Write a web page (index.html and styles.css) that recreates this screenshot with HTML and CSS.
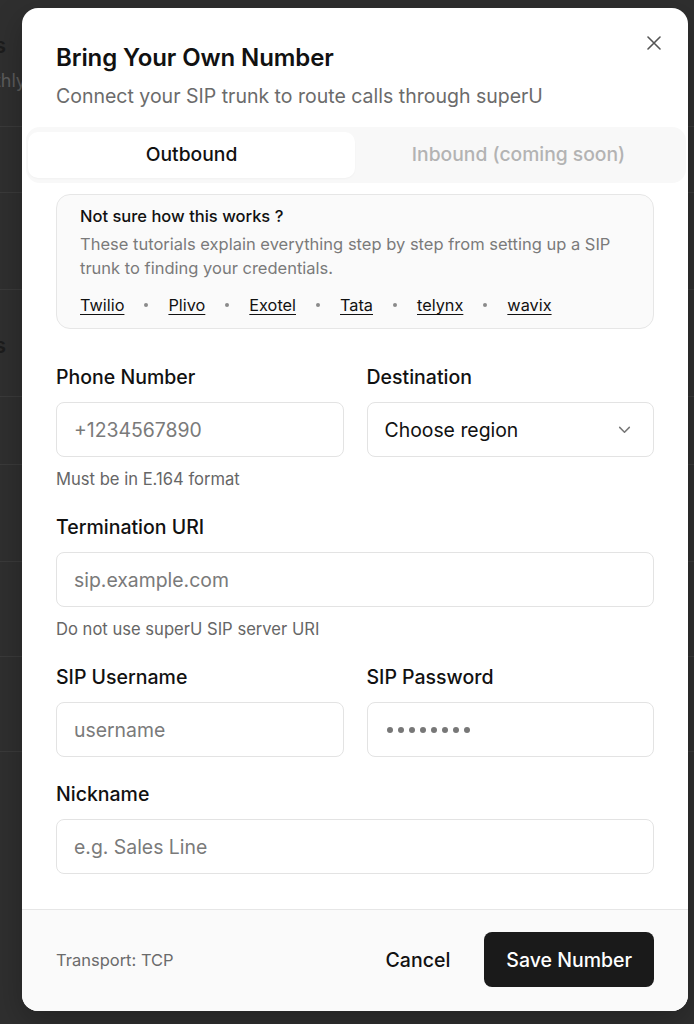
FILE: index.html
```html
<!DOCTYPE html>
<html lang="en">
<head>
<meta charset="utf-8">
<title>Bring Your Own Number</title>
<link rel="stylesheet" href="styles.css">
</head>
<body>
<div class="page">
  <div class="page-row r1">
    <div class="clip"><span class="pg-title">Numbers</span></div>
    <div class="clip"><span class="pg-sub">Monthly</span></div>
  </div>
  <div class="page-row r2"></div>
  <div class="page-row r3"></div>
  <div class="page-row r4"><div class="clip"><span class="pg-title">Calls</span></div></div>
  <div class="page-row r5"></div>
  <div class="page-row r6"></div>
  <div class="page-row r7"></div>
  <div class="page-row r8"></div>
</div>

<div class="modal" role="dialog" aria-labelledby="modal-title">
  <button class="close" aria-label="Close">
    <svg width="14" height="14" viewBox="0 0 14 14" fill="none" stroke="#555" stroke-width="1.6" stroke-linecap="round"><path d="M1 1L13 13M13 1L1 13"/></svg>
  </button>
  <div class="header">
    <h1 id="modal-title" class="title">Bring Your Own Number</h1>
    <p class="subtitle">Connect your SIP trunk to route calls through superU</p>
  </div>

  <div class="tabs">
    <div class="tab active">Outbound</div>
    <div class="tab">Inbound (coming soon)</div>
  </div>

  <div class="body">
    <div class="info">
      <div class="info-title">Not sure how this works ?</div>
      <p class="info-text">These tutorials explain everything step by step from setting up a SIP trunk to finding your credentials.</p>
      <div class="links">
        <a href="#">Twilio</a><span class="dot"></span>
        <a href="#">Plivo</a><span class="dot"></span>
        <a href="#">Exotel</a><span class="dot"></span>
        <a href="#">Tata</a><span class="dot"></span>
        <a href="#">telynx</a><span class="dot"></span>
        <a href="#">wavix</a>
      </div>
    </div>

    <div class="form">
      <div class="row">
        <div class="field">
          <label class="label">Phone Number</label>
          <input class="input" placeholder="+1234567890">
          <div class="help">Must be in E.164 format</div>
        </div>
        <div class="field">
          <label class="label">Destination</label>
          <div class="input select">
            <span>Choose region</span>
            <svg width="15" height="15" viewBox="0 0 14 14" fill="none" stroke="#777" stroke-width="1.4" stroke-linecap="round" stroke-linejoin="round"><path d="M2.5 5L7 9.5L11.5 5"/></svg>
          </div>
        </div>
      </div>

      <div class="field">
        <label class="label">Termination URI</label>
        <input class="input" placeholder="sip.example.com">
        <div class="help">Do not use superU SIP server URI</div>
      </div>

      <div class="row">
        <div class="field">
          <label class="label">SIP Username</label>
          <input class="input" placeholder="username">
        </div>
        <div class="field">
          <label class="label">SIP Password</label>
          <div class="input password"><span></span><span></span><span></span><span></span><span></span><span></span><span></span><span></span></div>
        </div>
      </div>

      <div class="field">
        <label class="label">Nickname</label>
        <input class="input" placeholder="e.g. Sales Line">
      </div>
    </div>
  </div>

  <div class="footer">
    <span class="transport">Transport: TCP</span>
    <div class="actions">
      <button class="btn-cancel">Cancel</button>
      <button class="btn-save">Save Number</button>
    </div>
  </div>
</div>
</body>
</html>
```

FILE: styles.css
```css
* { box-sizing: border-box; }
html, body { margin: 0; padding: 0; }
body {
  font-family: Inter, "Noto Sans", "Liberation Sans", sans-serif;
  background: #2f2f2f;
  width: 694px;
  height: 1024px;
  overflow: hidden;
  position: relative;
}

/* underlying page (dimmed) */
.page {
  width: 694px;
  height: 1024px;
  background: #2f2f2f;
  display: flex;
  flex-direction: column;
  overflow: hidden;
}
.page-row { border-bottom: 1px solid #3a3a3a; flex: none; }
.r1 { height: 127px; padding-top: 30px; }
.r2 { height: 66px; }
.r3 { height: 97px; }
.r4 { height: 107px; padding-top: 40px; }
.r5 { height: 68px; }
.r6 { height: 97px; }
.r7 { height: 95px; }
.r8 { height: 95px; }
.clip {
  width: 6px;
  display: flex;
  justify-content: flex-end;
  white-space: nowrap;
}
.pg-title { font-size: 22px; font-weight: 600; color: #1c1c1c; line-height: 30px; }
.pg-sub { font-size: 18px; color: #5c5c5c; line-height: 26px; margin-top: 8px; margin-right: -20px; }

/* modal */
.modal {
  position: absolute;
  top: 8px;
  left: 22px;
  width: 666px;
  height: 1003px;
  background: #fff;
  border-radius: 16px;
  display: flex;
  flex-direction: column;
  overflow: hidden;
  box-shadow: 0 10px 30px rgba(0,0,0,0.25);
}
.close {
  position: absolute;
  top: 28px;
  left: 625px;
  width: 14px;
  height: 14px;
  padding: 0;
  border: 0;
  background: none;
  display: flex;
}
.header { padding: 34px 34px 0; }
.title {
  margin: 0;
  font-size: 24px;
  line-height: 32px;
  font-weight: 600;
  color: #111;
  letter-spacing: -0.1px;
}
.subtitle {
  margin: 9px 0 0;
  font-size: 19.5px;
  line-height: 26px;
  color: #6b6b6b;
}

.tabs {
  margin: 18px 2px 0 4px;
  height: 56px;
  background: #f8f8f8;
  border-radius: 14px;
  padding: 5px 4px 5px 2px;
  display: grid;
  grid-template-columns: 1fr 1fr;
}
.tab {
  display: flex;
  align-items: center;
  justify-content: center;
  font-size: 19.3px;
  font-weight: 500;
  color: #b3b3b3;
  border-radius: 10px;
  padding-bottom: 2px;
}
.tab.active {
  background: #fff;
  color: #111;
  box-shadow: 0 1px 2px rgba(0,0,0,0.03);
}

.body {
  flex: 1;
  padding: 11px 34px 0;
}
.info {
  border: 1px solid #e6e6e6;
  background: #fafafa;
  border-radius: 14px;
  padding: 10px 23px 10px;
  height: 135px;
}
.info-title {
  font-size: 16.5px;
  line-height: 22px;
  font-weight: 500;
  color: #111;
}
.info-text {
  margin: 5px 0 0;
  font-size: 16.5px;
  line-height: 24px;
  color: #7a7a7a;
}
.links {
  margin-top: 13px;
  display: flex;
  align-items: center;
  gap: 20px;
  font-size: 16.3px;
  line-height: 24px;
}
.links a { color: #111; text-decoration: underline; text-underline-offset: 3px; }
.dot { width: 4px; height: 4px; border-radius: 50%; background: #8a8a8a; }

.form {
  margin-top: 36px;
  display: flex;
  flex-direction: column;
  gap: 25px;
}
.row {
  display: grid;
  grid-template-columns: 1fr 1fr;
  column-gap: 23px;
}
.field { display: flex; flex-direction: column; }
.label {
  font-size: 19.5px;
  line-height: 24px;
  font-weight: 500;
  color: #111;
}
.input {
  margin-top: 13px;
  height: 55px;
  border: 1px solid #e3e3e3;
  border-radius: 8px;
  background: #fff;
  padding: 0 17px;
  font-family: inherit;
  font-size: 19.4px;
  color: #111;
  width: 100%;
  outline: none;
}
.input::placeholder { color: #7a7a7a; }
.select {
  display: flex;
  align-items: center;
  justify-content: space-between;
  padding-right: 21px;
}
.password { display: flex; align-items: center; gap: 5px; padding-left: 19px; }
.password span { width: 6px; height: 6px; border-radius: 50%; background: #777; }
.help {
  margin-top: 11px;
  font-size: 16.6px;
  line-height: 22px;
  color: #666;
}

.footer {
  flex: none;
  height: 102px;
  border-top: 1px solid #e6e6e6;
  background: #fafafa;
  padding: 0 34px 2px;
  display: flex;
  align-items: center;
  justify-content: space-between;
}
.transport { font-size: 16.5px; color: #6b6b6b; }
.actions { display: flex; align-items: center; gap: 18px; }
.btn-cancel {
  border: 0;
  background: none;
  font-family: inherit;
  font-size: 19.5px;
  font-weight: 500;
  color: #111;
  padding: 0 16px;
  height: 55px;
}
.btn-save {
  border: 0;
  background: #1a1a1a;
  color: #fff;
  font-family: inherit;
  font-size: 19.5px;
  font-weight: 500;
  height: 55px;
  padding: 0 22px;
  border-radius: 8px;
}
```
